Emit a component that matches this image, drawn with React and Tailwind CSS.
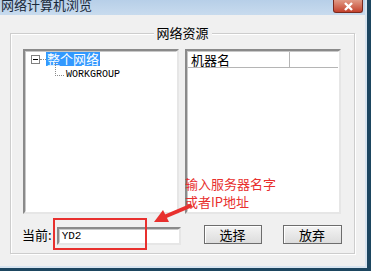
import React from "react";

const cjk = { fontFamily: '"Noto Sans CJK SC", "Noto Sans", sans-serif' };
const mono = { fontFamily: '"Liberation Mono", "DejaVu Sans Mono", monospace' };

function Sunken({ className = "", children }) {
  return (
    <div
      className={
        "border-2 border-t-[#8a8a8a] border-l-[#8a8a8a] border-r-[#e6e6e6] border-b-[#e6e6e6] bg-white " +
        className
      }
    >
      <div className="h-full w-full border border-t-[#c8c8c8] border-l-[#c8c8c8] border-r-white border-b-white">
        {children}
      </div>
    </div>
  );
}

function Button({ label, className = "" }) {
  return (
    <button
      className={
        "h-[19px] border border-[#6d6d6d] bg-gradient-to-b from-[#f4f4f4] to-[#dcdcdc] text-[13px] leading-none text-black shadow-[inset_1px_1px_0_#fff] " +
        className
      }
      style={cjk}
    >
      {label}
    </button>
  );
}

export default function App() {
  return (
    <div className="relative h-[271px] w-[371px] overflow-hidden bg-[#1d4660]">
      <div className="flex h-[268px] w-[367px] flex-col border-b-2 border-r-2 border-[#d7e4f0] bg-[#f0f0f0]">
        {/* title bar */}
        <div className="flex h-[15px] shrink-0 items-start overflow-hidden bg-gradient-to-b from-[#b7cfe8] to-[#c8dbee]">
          <span
            className="ml-[1px] mt-[-2px] text-[13px] leading-[13px] text-[#1b2a3a]"
            style={cjk}
          >
            网络计算机浏览
          </span>
          <div className="ml-auto mr-[2px] flex h-[13px] w-[30px] items-center justify-center rounded-b-[3px] border border-t-0 border-[#7a2a1e] bg-gradient-to-b from-[#e09a86] to-[#c3402c]">
            <svg width="11" height="9" viewBox="0 0 11 9">
              <path d="M2 1 L9 8 M9 1 L2 8" stroke="#fff" strokeWidth="2.4" />
            </svg>
          </div>
        </div>

        {/* group box */}
        <div className="relative ml-[10px] mt-[18px] h-[221px] w-[345px] border border-[#cdcdcd] shadow-[inset_1px_1px_0_#fff,1px_1px_0_#fff]">
          <span
            className="absolute left-1/2 top-[-9px] -translate-x-1/2 bg-[#f0f0f0] px-[3px] text-[13px] leading-[16px] text-black"
            style={cjk}
          >
            网络资源
          </span>

          <div className="flex gap-[6px] pl-[12px] pt-[15px]">
            <Sunken className="h-[165px] w-[156px]">
              <div className="pl-[5px]">
                <div className="flex items-center">
                  <div className="flex h-[9px] w-[9px] items-center justify-center border border-[#808080] bg-white">
                    <div className="h-px w-[5px] bg-black" />
                  </div>
                  <div className="w-[6px] border-t border-dotted border-[#8a8a8a]" />
                  <span
                    className="bg-[#3399ff] px-[1px] text-[13px] leading-[14px] text-white"
                    style={cjk}
                  >
                    整个网络
                  </span>
                </div>
                <div className="ml-[24px] flex items-center">
                  <div className="mt-[-8px] h-[13px] w-[9px] border-b border-l border-dotted border-[#8a8a8a]" />
                  <span className="ml-[2px] mt-[3px] text-[10px] leading-[12px] text-black" style={mono}>
                    WORKGROUP
                  </span>
                </div>
              </div>
            </Sunken>
            <Sunken className="h-[165px] w-[156px]">
              <div className="flex h-[16px] border-b border-[#b5b5b5]">
                <div
                  className="w-[102px] border-r border-[#b5b5b5] pl-[3px] text-[13px] leading-[16px] text-black"
                  style={cjk}
                >
                  机器名
                </div>
              </div>
            </Sunken>
          </div>

          <div className="mt-[10px] flex items-center">
            <span className="ml-[11px] text-[13px] leading-none text-black" style={cjk}>
              当前:
            </span>
            <Sunken className="ml-[5px] mt-[3px] h-[18px] w-[124px]">
              <span className="block pl-[2px] text-[11px] leading-[13px] text-black" style={mono}>
                YD2
              </span>
            </Sunken>
            <Button label="选择" className="ml-[23px] w-[58px]" />
            <Button label="放弃" className="ml-[21px] w-[59px]" />
          </div>
        </div>
      </div>

      {/* annotation overlay */}
      <div className="absolute left-[53px] top-[218px] h-[32px] w-[94px] border-2 border-[#e8302e]" />
      <svg className="absolute left-[150px] top-[200px]" width="45" height="28" viewBox="0 0 45 28">
        <path d="M40 6 L14 17" stroke="#e8302e" strokeWidth="4" strokeLinecap="round" />
        <path d="M4 22 L13 10 L19 22 Z" fill="#e8302e" />
      </svg>
      <div
        className="absolute left-[185px] top-[175px] text-[13px] leading-[18px] text-[#e8302e]"
        style={cjk}
      >
        输入服务器名字
        <br />
        或者IP地址
      </div>
    </div>
  );
}
